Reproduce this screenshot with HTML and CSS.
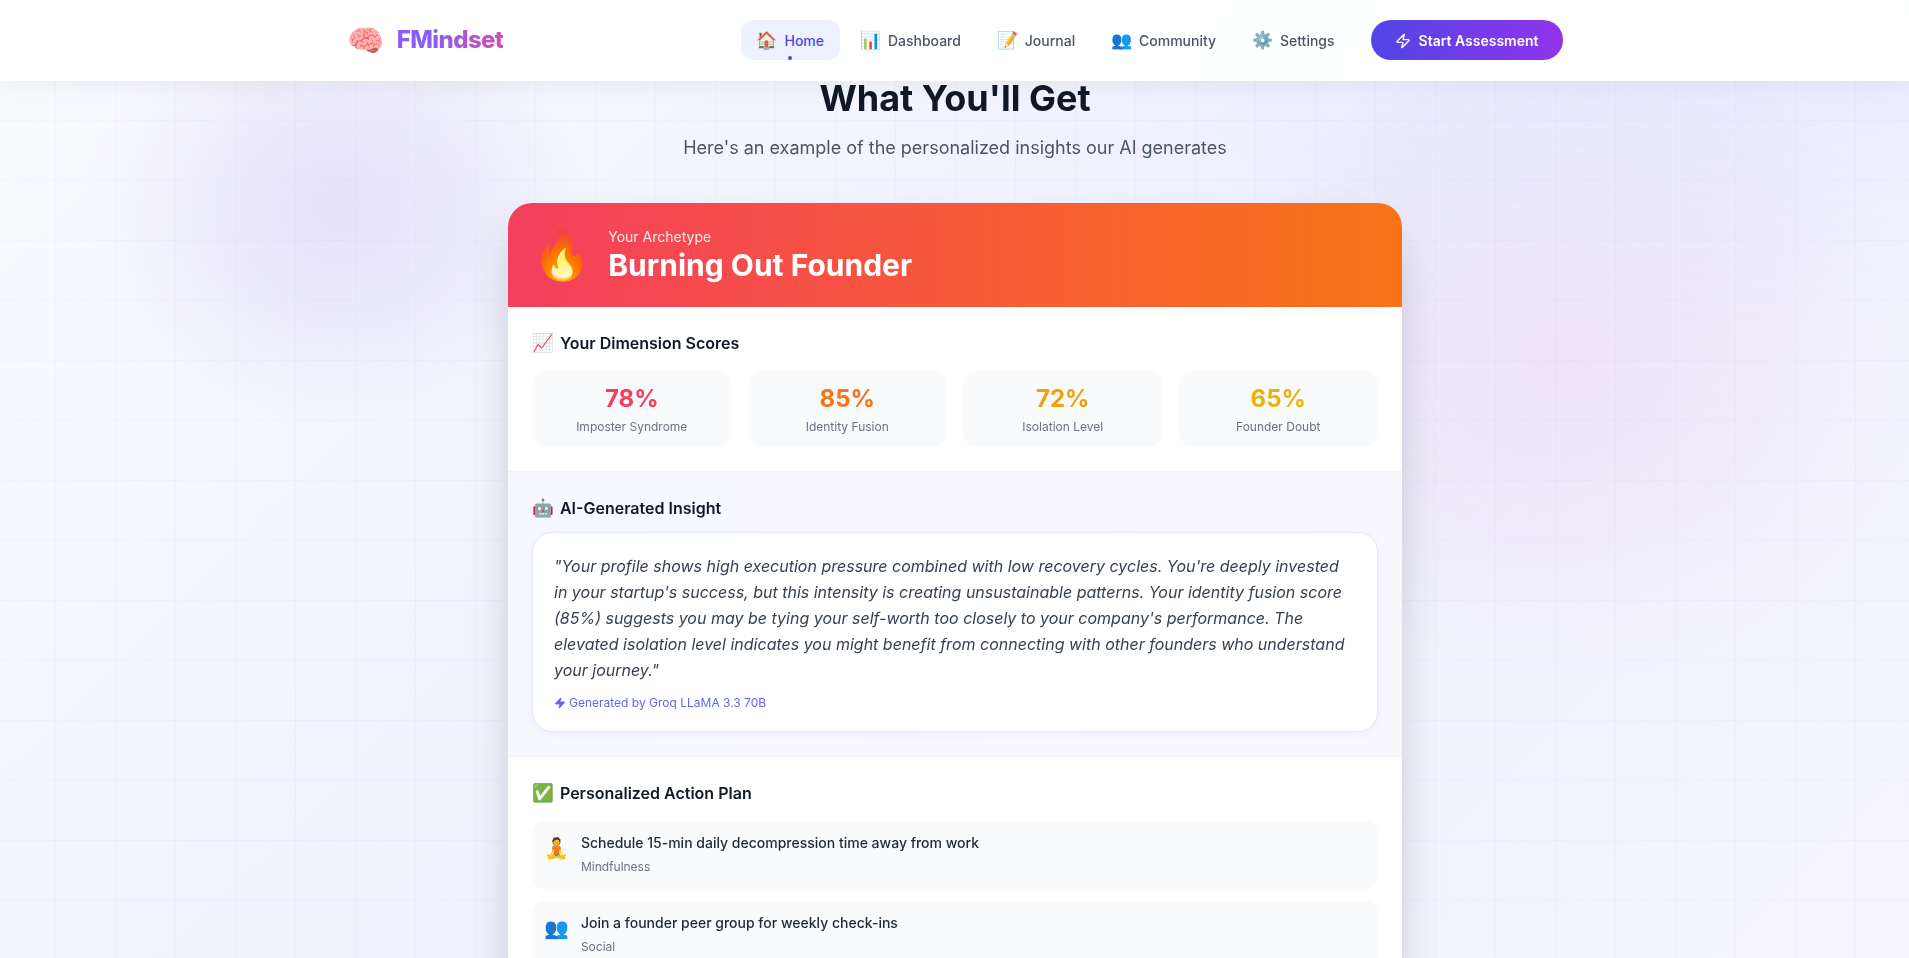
FILE: index.html
```html
<!DOCTYPE html>
<html lang="en">
<head>
<meta charset="utf-8">
<title>FMindset</title>
<link rel="stylesheet" href="styles.css">
</head>
<body>
<div class="backdrop"></div>
<header class="topbar">
  <div class="topbar-inner">
    <a class="logo"><span class="logo-icon">🧠</span><span class="logo-text">FMindset</span></a>
    <nav class="nav">
      <a class="nav-item active"><span class="nav-emoji">🏠</span>Home</a>
      <a class="nav-item"><span class="nav-emoji">📊</span>Dashboard</a>
      <a class="nav-item"><span class="nav-emoji">📝</span>Journal</a>
      <a class="nav-item"><span class="nav-emoji">👥</span>Community</a>
      <a class="nav-item"><span class="nav-emoji">⚙️</span>Settings</a>
      <a class="cta">
        <svg class="cta-icon" viewBox="0 0 24 24" fill="none" stroke="currentColor" stroke-width="2" stroke-linecap="round" stroke-linejoin="round"><path d="M4 14a1 1 0 0 1-.78-1.63l9.9-10.2a.5.5 0 0 1 .86.46l-1.92 6.02A1 1 0 0 0 13 10h7a1 1 0 0 1 .78 1.63l-9.9 10.2a.5.5 0 0 1-.86-.46l1.92-6.02A1 1 0 0 0 11 14z"/></svg>
        Start Assessment
      </a>
    </nav>
  </div>
</header>
<main class="page">
  <h2 class="hero-title">What You'll Get</h2>
  <p class="hero-sub">Here's an example of the personalized insights our AI generates</p>
  <article class="card">
    <div class="card-head">
      <span class="head-emoji">🔥</span>
      <div>
        <div class="head-label">Your Archetype</div>
        <div class="head-title">Burning Out Founder</div>
      </div>
    </div>
    <section class="block">
      <h3 class="block-title"><span class="title-emoji">📈</span>Your Dimension Scores</h3>
      <div class="scores">
        <div class="score"><div class="score-value rose">78%</div><div class="score-label">Imposter Syndrome</div></div>
        <div class="score"><div class="score-value orange">85%</div><div class="score-label">Identity Fusion</div></div>
        <div class="score"><div class="score-value amber">72%</div><div class="score-label">Isolation Level</div></div>
        <div class="score"><div class="score-value yellow">65%</div><div class="score-label">Founder Doubt</div></div>
      </div>
    </section>
    <section class="block block-tint">
      <h3 class="block-title title-tight"><span class="title-emoji">🤖</span>AI-Generated Insight</h3>
      <div class="quote">
        <p class="quote-text">"Your profile shows high execution pressure combined with low recovery cycles. You're deeply invested in your startup's success, but this intensity is creating unsustainable patterns. Your identity fusion score (85%) suggests you may be tying your self-worth too closely to your company's performance. The elevated isolation level indicates you might benefit from connecting with other founders who understand your journey."</p>
        <div class="quote-foot">
          <svg class="foot-icon" viewBox="0 0 24 24" fill="currentColor" stroke="currentColor" stroke-width="2" stroke-linecap="round" stroke-linejoin="round"><path d="M4 14a1 1 0 0 1-.78-1.63l9.9-10.2a.5.5 0 0 1 .86.46l-1.92 6.02A1 1 0 0 0 13 10h7a1 1 0 0 1 .78 1.63l-9.9 10.2a.5.5 0 0 1-.86-.46l1.92-6.02A1 1 0 0 0 11 14z"/></svg>
          Generated by Groq LLaMA 3.3 70B
        </div>
      </div>
    </section>
    <section class="block">
      <h3 class="block-title"><span class="title-emoji">✅</span>Personalized Action Plan</h3>
      <div class="actions">
        <div class="action"><span class="action-emoji">🧘</span><div><div class="action-text">Schedule 15-min daily decompression time away from work</div><div class="action-tag">Mindfulness</div></div></div>
        <div class="action"><span class="action-emoji">👥</span><div><div class="action-text">Join a founder peer group for weekly check-ins</div><div class="action-tag">Social</div></div></div>
      </div>
    </section>
  </article>
</main>
</body>
</html>
```
FILE: styles.css
```css
* { box-sizing: border-box; }
html, body { margin: 0; height: 100%; overflow: hidden; }
body {
  font-family: Inter, "Noto Color Emoji", sans-serif;
  line-height: 1.6;
  color: #111827;
  background: linear-gradient(135deg, #fafbff 0%, #f2f4fe 35%, #eef1fe 55%, #f6f5ff 100%);
}
.backdrop {
  position: fixed;
  inset: 0;
  z-index: -1;
  background-image:
    linear-gradient(rgba(99, 102, 241, 0.035) 1px, transparent 1px),
    linear-gradient(90deg, rgba(99, 102, 241, 0.035) 1px, transparent 1px),
    radial-gradient(ellipse 250px 220px at 335px 205px, rgba(130, 93, 223, 0.14), rgba(130, 93, 223, 0.07) 55%, transparent),
    radial-gradient(ellipse 360px 320px at 1567px 360px, rgba(225, 142, 215, 0.14), rgba(225, 142, 215, 0.07) 55%, transparent),
    radial-gradient(ellipse 700px 260px at 1700px 70px, rgba(99, 130, 241, 0.05), transparent);
  background-size: 60px 60px, 60px 60px, auto, auto, auto;
  background-position: 0 0, 55px 0, 0 0, 0 0, 0 0;
}
.topbar {
  height: 81px;
  border-bottom: 1px solid rgba(255, 255, 255, 0.6);
  background: rgba(255, 255, 255, 0.95);
  box-shadow: 0 4px 24px rgba(0, 0, 0, 0.06);
  position: relative;
  z-index: 2;
}
.topbar-inner {
  max-width: 1280px;
  height: 100%;
  margin: 0 auto;
  padding: 0 32px;
  display: flex;
  align-items: center;
  justify-content: space-between;
}
.logo { display: flex; align-items: center; gap: 12px; margin-left: 1px; padding-top: 1px; }
.logo-icon { font-size: 30px; line-height: 1; }
.logo-text {
  font-size: 24px;
  font-weight: 800;
  letter-spacing: -0.6px;
  background: linear-gradient(90deg, #8b5cf6 30%, #ec4899 130%);
  -webkit-background-clip: text;
  background-clip: text;
  color: transparent;
}
.nav { display: flex; align-items: center; gap: 4px; }
.nav-item {
  position: relative;
  display: flex;
  align-items: center;
  gap: 6.7px;
  height: 40px;
  padding: 2px 16px 0;
  border-radius: 12px;
  font-size: 14px;
  font-weight: 500;
  color: #4b5563;
}
.nav-emoji { font-size: 17px; }
.nav-item.active { background: #eef2ff; color: #4f46e5; }
.nav-item.active::after {
  content: "";
  position: absolute;
  left: 50%;
  bottom: 0;
  width: 4px;
  height: 4px;
  margin-left: -2px;
  border-radius: 50%;
  background: #4f46e5;
}
.cta {
  display: flex;
  align-items: center;
  gap: 8px;
  height: 40px;
  margin-left: 16px;
  padding: 2px 24px 0;
  border-radius: 20px;
  font-size: 14px;
  font-weight: 600;
  color: #fff;
  background: linear-gradient(90deg, #4f46e5, #9333ea);
}
.cta-icon { width: 16px; height: 16px; }
.page { padding-left: 1px; }
.hero-title {
  margin: -3px 0 0;
  text-align: center;
  font-size: 36px;
  font-weight: 700;
  line-height: 40px;
  color: #111827;
}
.hero-sub {
  margin: 16px 0 0;
  text-align: center;
  font-size: 18px;
  line-height: 28px;
  color: #4b5563;
}
.card {
  width: 894px;
  margin: 41px auto 0;
  border-radius: 24px;
  background: #fff;
  overflow: hidden;
  box-shadow: 0 25px 50px -12px rgba(0, 0, 0, 0.25);
}
.card-head {
  height: 104px;
  padding: 0 24px;
  display: flex;
  align-items: center;
  gap: 16.5px;
  color: #fff;
  background: linear-gradient(90deg, #f43f5e, #f97316);
}
.head-emoji { font-size: 48px; line-height: 1; }
.head-label { font-size: 14px; line-height: 20px; opacity: 0.9; }
.head-title { font-size: 30px; font-weight: 700; line-height: 36px; }
.block { padding: 24px; border-top: 1px solid #f3f4f6; }
.card-head + .block { border-top: 0; }
.block-tint { background: linear-gradient(90deg, #f7f8ff, #faf7ff); }
.block-title {
  margin: 0 0 16px;
  display: flex;
  align-items: center;
  gap: 6px;
  font-size: 16px;
  font-weight: 600;
  line-height: 24px;
  color: #111827;
}
.title-tight { margin-bottom: 12px; }
.title-emoji { font-size: 17.6px; }
.scores { display: grid; grid-template-columns: repeat(4, 1fr); gap: 16px; }
.score {
  height: 76px;
  padding: 12px;
  border-radius: 14px;
  background: #f9fafb;
  text-align: center;
}
.score-value { font-size: 24px; font-weight: 700; line-height: 32px; }
.score-label { font-size: 12px; line-height: 24px; color: #6b7280; }
.rose { color: #f43f5e; }
.orange { color: #f97316; }
.amber { color: #f59e0b; }
.yellow { color: #eab308; }
.quote {
  padding: 20px 23px 20px 21px;
  border: 1px solid #e0e7ff;
  border-radius: 20px;
  background: #fff;
  box-shadow: 0 2px 8px rgba(99, 102, 241, 0.08);
}
.quote-text {
  margin: 0;
  font-size: 16px;
  font-style: italic;
  line-height: 26px;
  color: #374151;
}
.quote-foot {
  margin-top: 12px;
  display: flex;
  align-items: center;
  gap: 3px;
  font-size: 12px;
  line-height: 16px;
  color: #6366f1;
}
.foot-icon { width: 12px; height: 12px; }
.actions { display: flex; flex-direction: column; gap: 12px; }
.action {
  display: flex;
  gap: 12px;
  padding: 12px;
  border-radius: 12px;
  background: #f9fafb;
}
.action-emoji { font-size: 20px; line-height: 28px; margin-top: 1px; }
.action-text { font-size: 14px; font-weight: 500; line-height: 20px; color: #1f2937; }
.action-tag { margin-top: 4px; font-size: 12px; line-height: 20px; color: #6b7280; }
```
